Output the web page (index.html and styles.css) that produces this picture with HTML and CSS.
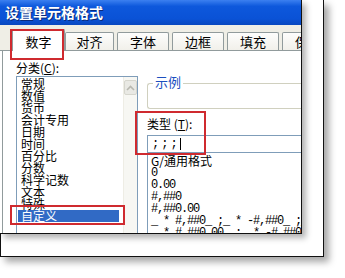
FILE: index.html
```html
<!DOCTYPE html>
<html lang="zh-CN">
<head>
    <meta charset="UTF-8">
    <title>设置单元格格式</title>
    <link rel="stylesheet" href="styles.css">
</head>
<body>
    <div class="frame">
        <div class="dialog">
            <div class="titlebar">设置单元格格式</div>

            <div class="tabs">
                <div class="tab active">数字</div>
                <div class="tab">对齐</div>
                <div class="tab">字体</div>
                <div class="tab">边框</div>
                <div class="tab">填充</div>
                <div class="tab">保护</div>
            </div>

            <div class="page">
                <div class="col-left">
                    <div class="label">分类(<u>C</u>):</div>
                    <div class="listbox">
                        <ul class="items">
                            <li>常规</li>
                            <li>数值</li>
                            <li>货币</li>
                            <li>会计专用</li>
                            <li>日期</li>
                            <li>时间</li>
                            <li>百分比</li>
                            <li>分数</li>
                            <li>科学记数</li>
                            <li>文本</li>
                            <li>特殊</li>
                            <li class="selected">自定义</li>
                        </ul>
                        <div class="scrollbar">
                            <div class="scroll-up">
                                <svg width="9" height="6" viewBox="0 0 9 6"><path d="M1 5 L4.5 1.5 L8 5" fill="none" stroke="#b8b8b0" stroke-width="1.6"/></svg>
                            </div>
                        </div>
                    </div>
                </div>

                <div class="col-right">
                    <div class="groupbox">
                        <span class="legend">示例</span>
                    </div>
                    <div class="label type-label">类型 (<u>T</u>):</div>
                    <div class="textbox"><span class="typed">;;;</span><span class="caret"></span></div>
                    <ul class="formats">
                        <li>G/通用格式</li>
                        <li>0</li>
                        <li>0.00</li>
                        <li>#,##0</li>
                        <li>#,##0.00</li>
                        <li>_ * #,##0_ ;_ * -#,##0_ ;_ * "-"_ ;_ @_ </li>
                        <li>_ * #,##0.00_ ;_ * -#,##0.00_ ;</li>
                    </ul>
                </div>
            </div>

            <!-- red annotation boxes -->
            <div class="mark mark-tab"></div>
            <div class="mark mark-type"></div>
            <div class="mark mark-custom"></div>
        </div>
    </div>
</body>
</html>
```

FILE: styles.css
```css
body {
    margin: 0;
    width: 345px;
    height: 278px;
    overflow: hidden;
    background: #fff;
    font-family: "Noto Sans CJK SC", "Liberation Sans", sans-serif;
}
.frame {
    width: 322px;
    height: 256px;
    background: #fff;
    border: 1px solid #111;
    border-top: none;
    box-shadow: 5px 5px 7px rgba(0, 0, 0, 0.35);
}
.dialog {
    position: relative;
    width: 301px;
    height: 233px;
    margin-left: -1px;
    background: #fff;
    border-right: 1px solid #111;
    border-bottom: 1px solid #111;
    box-shadow: 4px 4px 6px rgba(0, 0, 0, 0.3);
    overflow: hidden;
}
.titlebar {
    height: 25px;
    line-height: 24px;
    padding-left: 5px;
    color: #fff;
    font-size: 14px;
    font-weight: bold;
    background: linear-gradient(#3b80f0, #0d58dc 25%, #0a52d6 75%, #0847bf);
    text-shadow: 1px 1px 0 #0a2a7a;
}
.tabs {
    display: flex;
    align-items: flex-end;
    height: 25px;
    padding-left: 12px;
    background: #efeee6;
    border-bottom: 1px solid #919b9c;
}
.tab {
    flex: none;
    width: 50px;
    height: 17px;
    line-height: 17px;
    margin-right: 3px;
    text-align: center;
    font-size: 13px;
    color: #000;
    background: linear-gradient(#fdfdfc, #f1f0ea);
    border: 1px solid #919b9c;
    border-bottom: none;
    border-radius: 2px 2px 0 0;
}
.tab.active {
    width: 51px;
    height: 21px;
    line-height: 24px;
    margin-right: 0;
    margin-bottom: -1px;
    background: #fff;
}
.tab:nth-child(2) {
    width: 47px;
}
.page {
    display: flex;
    gap: 9px;
    margin-left: 2px;
    padding: 10px 0 0 13px;
    border-left: 1px solid #919b9c;
    background: #fff;
}
.label {
    font-size: 12px;
    line-height: 14px;
    height: 14px;
}
.label u {
    text-decoration: underline;
}
.col-left {
    width: 122px;
    flex: none;
}
.listbox {
    display: flex;
    margin-top: 1px;
    height: 170px;
    border: 1px solid #7f9db9;
}
.items {
    list-style: none;
    margin: 0;
    padding: 1px 0 0 1px;
    flex: 1;
}
.items li {
    height: 12px;
    line-height: 12px;
    font-size: 12px;
    padding-left: 3px;
    margin-right: 4px;
}
.items li.selected {
    background: #316ac5;
    color: #fff;
}
.scrollbar {
    width: 13px;
    background: #f7f7f3;
    border-left: 1px solid #eeede5;
}
.scroll-up {
    height: 13px;
    margin-top: 3px;
    display: flex;
    align-items: center;
    justify-content: center;
    background: #e9e9e4;
    border: 1px solid #d6d6ce;
    border-radius: 2px;
}
.col-right {
    flex: 1;
    display: flex;
    flex-direction: column;
}
.groupbox {
    position: relative;
    height: 24px;
    margin-top: 22px;
    border: 1px solid #d0d0bf;
    border-right: none;
    border-radius: 3px 0 0 3px;
}
.legend {
    position: absolute;
    top: -9px;
    left: 5px;
    padding: 0 2px;
    background: #fff;
    color: #1c4fbf;
    font-size: 13px;
    line-height: 14px;
}
.type-label {
    margin-top: 8px;
}
.textbox {
    display: flex;
    align-items: center;
    height: 16px;
    margin-top: 4px;
    padding-left: 4px;
    border: 1px solid #7f9db9;
    border-right: none;
}
.typed {
    font-family: "Liberation Mono", monospace;
    font-size: 12px;
    letter-spacing: 2px;
}
.caret {
    width: 1px;
    height: 12px;
    background: #000;
}
.formats {
    list-style: none;
    margin: 0;
    padding: 2px 0 0 3px;
    height: 100px;
    border-left: 1px solid #7f9db9;
    font-family: "Liberation Mono", "Noto Sans CJK SC", monospace;
    font-size: 12px;
    letter-spacing: -1.2px;
}
.formats li {
    height: 12px;
    line-height: 12px;
    white-space: pre;
}
.formats li:first-child {
    font-family: "Noto Sans CJK SC", sans-serif;
    font-size: 12px;
    letter-spacing: 0;
}
.mark {
    position: absolute;
    border: 2px solid #cf2a2f;
}
.mark-tab {
    left: 10px;
    top: 29px;
    width: 50px;
    height: 27px;
}
.mark-type {
    left: 135px;
    top: 111px;
    width: 67px;
    height: 40px;
}
.mark-custom {
    left: 10px;
    top: 205px;
    width: 111px;
    height: 16px;
}
```
